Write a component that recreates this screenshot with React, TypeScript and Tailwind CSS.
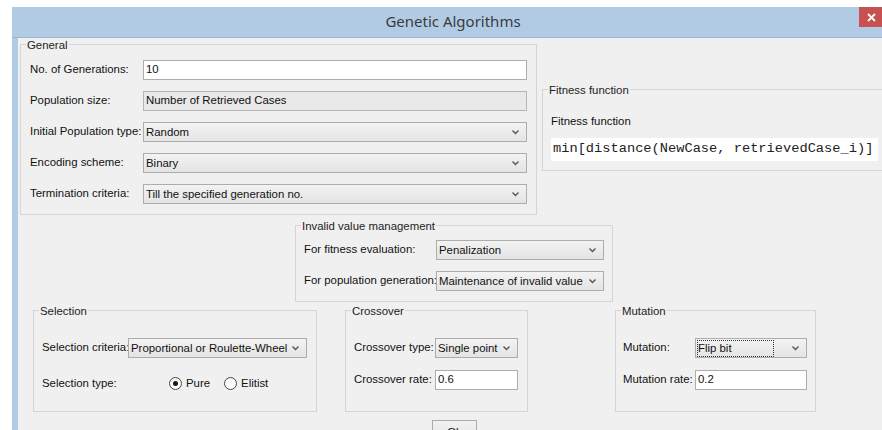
import type { ReactNode } from "react";

const Chevron = () => (
    <svg width="9" height="6" viewBox="0 0 9 6" className="shrink-0">
        <path d="M1.5 1.5 L4.5 4.5 L7.5 1.5" fill="none" stroke="#555" strokeWidth="1.4" />
    </svg>
);

type GroupProps = {
    title: string;
    className: string;
    children?: ReactNode;
};

// titled etched border, the caption sits over the top line
const Group = ({ title, className, children }: GroupProps) => (
    <div className={`relative shrink-0 border border-[#d5d5d5] ${className}`}>
        <span className="absolute -top-[7px] left-[5px] px-px bg-[#f0f0f0] leading-[14px] text-[#222] whitespace-nowrap">
            {title}
        </span>
        {children}
    </div>
);

const Combo = ({ value, className, focused }: { value: string; className: string; focused?: boolean }) => (
    <div className={`flex items-center h-[20px] border border-[#acacac] bg-linear-to-b from-[#f3f3f3] to-[#e4e4e4] pl-[2px] pr-[6px] ${className}`}>
        <span className={`flex-1 whitespace-nowrap overflow-hidden leading-[15px] ${focused ? "outline outline-1 outline-dotted outline-[#333] mr-[18px]" : ""}`}>
            {value}
        </span>
        <Chevron />
    </div>
);

const TextField = ({ value, className, readOnly }: { value: string; className: string; readOnly?: boolean }) => (
    <div className={`flex items-center h-[20px] border pl-[2px] ${readOnly ? "bg-[#e9e9e9] border-[#b5b5b5]" : "bg-white border-[#abadb3]"} ${className}`}>
        {value}
    </div>
);

const Radio = ({ label, checked }: { label: string; checked?: boolean }) => (
    <label className="flex items-center gap-[4px]">
        <span className="flex items-center justify-center w-[13px] h-[13px] rounded-full border border-[#4a4a4a] bg-linear-to-b from-[#f4f4f4] to-white">
            {checked && <span className="w-[5px] h-[5px] rounded-full bg-[#1a1a1a]" />}
        </span>
        {label}
    </label>
);

const generalRows = [
    { label: "No. of Generations:", kind: "input", value: "10" },
    { label: "Population size:", kind: "readonly", value: "Number of Retrieved Cases" },
    { label: "Initial Population type:", kind: "combo", value: "Random" },
    { label: "Encoding scheme:", kind: "combo", value: "Binary" },
    { label: "Termination criteria:", kind: "combo", value: "Till the specified generation no." },
];

export default function App() {
    return (
        <div className="w-[882px] h-[430px] overflow-hidden bg-white pt-[7px] pl-[12px] font-['Liberation_Sans',Arial,sans-serif] text-[11.4px] text-[#111]">
            <div className="flex flex-col w-[890px] h-[423px] border-l-[6px] border-[#b1cbe5]">
                {/* title bar */}
                <div className="relative shrink-0 flex items-center justify-center h-[31px] bg-[#b1cbe5] border-b border-[#9db6cf] -ml-[6px] pl-[6px]">
                    <span className="font-['Noto_Sans',sans-serif] text-[15px] text-[#3b3b3b] -mt-[1px] -ml-[14px]">Genetic Algorithms</span>
                    <div className="absolute top-0 left-[847px] w-[24px] h-[20px] bg-[#c75050] flex items-center justify-center">
                        <svg width="9" height="9" viewBox="0 0 9 9">
                            <path d="M1 1 L8 8 M8 1 L1 8" stroke="white" strokeWidth="1.8" />
                        </svg>
                    </div>
                </div>

                <div className="flex-1 min-h-0 flex flex-col bg-[#f0f0f0]">
                    <div className="flex items-start mt-[6px] ml-[2px]">
                        <Group title="General" className="w-[517px] h-[171px] pt-[15px] px-[9px]">
                            <div className="flex flex-col gap-[11px]">
                                {generalRows.map((row) => (
                                    <div key={row.label} className="flex items-center h-[20px]">
                                        <span className="w-[113px] shrink-0 whitespace-nowrap">{row.label}</span>
                                        {row.kind === "combo" ? (
                                            <Combo value={row.value} className="flex-1" />
                                        ) : (
                                            <TextField value={row.value} className="flex-1" readOnly={row.kind === "readonly"} />
                                        )}
                                    </div>
                                ))}
                            </div>
                        </Group>

                        <Group title="Fitness function" className="ml-[5px] mt-[45px] w-[345px] h-[82px] pl-[8px] pt-[24px]">
                            <div className="leading-[14px]">Fitness function</div>
                            <div className="mt-[10px] w-[327px] h-[23px] bg-white flex items-center pl-[2px] font-['Liberation_Mono',monospace] text-[13.7px] text-[#222] whitespace-nowrap">
                                min[distance(NewCase, retrievedCase_i)]
                            </div>
                        </Group>
                    </div>

                    <Group title="Invalid value management" className="ml-[277px] mt-[10px] w-[318px] h-[77px] pt-[14px] pl-[8px] pr-[8px]">
                        <div className="flex flex-col gap-[11px]">
                            <div className="flex items-center h-[20px]">
                                <span className="w-[132px] shrink-0">For fitness evaluation:</span>
                                <Combo value="Penalization" className="flex-1" />
                            </div>
                            <div className="flex items-center h-[20px]">
                                <span className="w-[132px] shrink-0 whitespace-nowrap">For population generation:</span>
                                <Combo value="Maintenance of invalid value" className="flex-1" />
                            </div>
                        </div>
                    </Group>

                    <div className="flex items-start mt-[8px] ml-[15px]">
                        <Group title="Selection" className="w-[284px] h-[102px] pt-[27px] pl-[8px]">
                            <div className="flex items-center h-[20px]">
                                <span className="w-[86px] shrink-0 whitespace-nowrap">Selection criteria:</span>
                                <Combo value="Proportional or Roulette-Wheel" className="w-[179px]" />
                            </div>
                            <div className="flex items-center h-[20px] mt-[16px]">
                                <span className="w-[127px] shrink-0">Selection type:</span>
                                <div className="flex items-center gap-[14px]">
                                    <Radio label="Pure" checked />
                                    <Radio label="Elitist" />
                                </div>
                            </div>
                        </Group>

                        <Group title="Crossover" className="ml-[28px] w-[183px] h-[102px] pt-[27px] pl-[8px]">
                            <div className="flex items-center h-[20px]">
                                <span className="w-[81px] shrink-0 whitespace-nowrap">Crossover type:</span>
                                <Combo value="Single point" className="w-[83px]" />
                            </div>
                            <div className="flex items-center h-[20px] mt-[12px]">
                                <span className="w-[81px] shrink-0 whitespace-nowrap">Crossover rate:</span>
                                <TextField value="0.6" className="w-[83px]" />
                            </div>
                        </Group>

                        <Group title="Mutation" className="ml-[87px] w-[201px] h-[102px] pt-[27px] pl-[7px]">
                            <div className="flex items-center h-[20px]">
                                <span className="w-[72px] shrink-0">Mutation:</span>
                                <Combo value="Flip bit" className="w-[112px]" focused />
                            </div>
                            <div className="flex items-center h-[20px] mt-[12px]">
                                <span className="w-[72px] shrink-0 whitespace-nowrap">Mutation rate:</span>
                                <TextField value="0.2" className="w-[112px]" />
                            </div>
                        </Group>
                    </div>

                    <button className="shrink-0 ml-[414px] mt-[8px] w-[45px] h-[23px] border border-[#acacac] bg-linear-to-b from-[#f2f2f2] to-[#e3e3e3] text-[11.4px] leading-[20px]">
                        Ok
                    </button>
                </div>
            </div>
        </div>
    );
}
